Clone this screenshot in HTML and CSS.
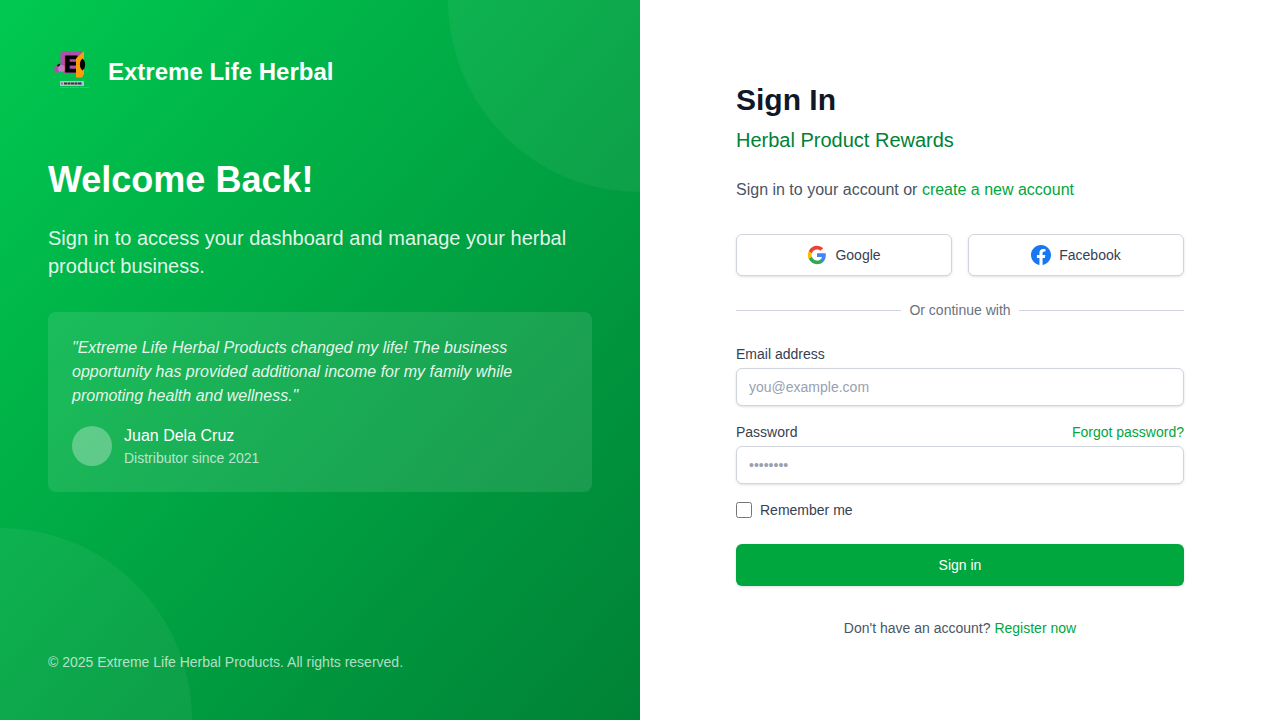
FILE: index.html
```html
<!DOCTYPE html>
<html lang="en">
<head>
<meta charset="utf-8">
<meta name="viewport" content="width=device-width, initial-scale=1">
<title>Sign In - Extreme Life Herbal</title>
<link rel="stylesheet" href="styles.css">
</head>
<body>
<div class="page">
  <aside class="intro">
    <div class="intro-top">
      <div class="brand">
        <svg class="brand-logo" viewBox="0 0 48 48" role="img" aria-label="Extreme Life Herbal logo">
          <path d="M14.500 3H36L28 10.500V26H17L12.500 22.500V5Z" fill="#b04fae"/>
          <path d="M6 19L10 17L15 19V24H12L7 25Z" fill="#b04fae"/>
          <path d="M9 17L12 15.500V19H10Z" fill="#111"/>
          <circle cx="13.500" cy="20.500" r="3.500" fill="#c878c4"/>
          <text class="brand-letter" x="16" y="24">E</text>
          <path d="M36 3L28 10.500V29.500H34L36 26Z" fill="#ff9c0a"/>
          <path d="M34.500 10.500C38 13 38 20 34.500 22.500C31 20 31 13 34.500 10.500Z" fill="#000"/>
          <rect x="12" y="33" width="24" height="5" fill="#b9c2b9"/>
          <path d="M16 35.500H34" stroke="#30343c" stroke-width="2" stroke-dasharray="3 .5"/>
          <path d="M14 34.500V36.500M28 34.500V36.500M32.500 34.500V36.500" stroke="#2637d0"/>
          <path d="M12 39.500H41" stroke="#56b778" stroke-width=".8" stroke-dasharray="9 1"/>
        </svg>
        <span class="brand-name">Extreme Life Herbal</span>
      </div>
      <h1 class="intro-title">Welcome Back!</h1>
      <p class="intro-text">Sign in to access your dashboard and manage your herbal product business.</p>
      <figure class="quote">
        <blockquote class="quote-text">"Extreme Life Herbal Products changed my life! The business opportunity has provided additional income for my family while promoting health and wellness."</blockquote>
        <figcaption class="person">
          <span class="avatar"></span>
          <span class="person-info">
            <span class="person-name">Juan Dela Cruz</span>
            <span class="person-role">Distributor since 2021</span>
          </span>
        </figcaption>
      </figure>
    </div>
    <p class="copyright">© 2025 Extreme Life Herbal Products. All rights reserved.</p>
  </aside>

  <main class="panel">
    <div class="panel-body">
      <h2 class="title">Sign In</h2>
      <p class="subtitle">Herbal Product Rewards</p>
      <p class="lead">Sign in to your account or <a class="link" href="#register">create a new account</a></p>

      <div class="social">
        <button class="social-button" type="button">
          <svg class="social-icon" viewBox="0 0 24 24" aria-hidden="true">
            <path d="M22.560 12.250c0-.78-.07-1.530-.2-2.250H12v4.260h5.920c-.26 1.370-1.040 2.530-2.210 3.310v2.770h3.570c2.080-1.920 3.280-4.740 3.280-8.090z" fill="#4285F4"/>
            <path d="M12 23c2.970 0 5.460-.98 7.280-2.660l-3.570-2.770c-.98.66-2.230 1.060-3.710 1.060-2.860 0-5.290-1.930-6.160-4.530H2.180v2.840C3.990 20.530 7.700 23 12 23z" fill="#34A853"/>
            <path d="M5.840 14.090c-.22-.66-.35-1.360-.35-2.090s.13-1.430.35-2.090V7.070H2.180C1.430 8.550 1 10.220 1 12s.43 3.450 1.180 4.930l3.660-2.840z" fill="#FBBC05"/>
            <path d="M12 5.380c1.620 0 3.060.56 4.210 1.640l3.150-3.150C17.450 2.090 14.970 1 12 1 7.700 1 3.990 3.470 2.180 7.070l3.660 2.840c.87-2.600 3.300-4.530 6.160-4.530z" fill="#EA4335"/>
          </svg>
          Google
        </button>
        <button class="social-button" type="button">
          <svg class="social-icon" viewBox="0 0 24 24" aria-hidden="true">
            <path d="M24 12.073c0-6.627-5.373-12-12-12s-12 5.373-12 12c0 5.990 4.388 10.954 10.125 11.854v-8.385H7.078v-3.470h3.047V9.430c0-3.007 1.792-4.669 4.533-4.669 1.312 0 2.686.235 2.686.235v2.953H15.830c-1.491 0-1.956.925-1.956 1.874v2.250h3.328l-.532 3.470h-2.796v8.385C19.612 23.027 24 18.062 24 12.073z" fill="#1877F2"/>
          </svg>
          Facebook
        </button>
      </div>

      <div class="divider">Or continue with</div>

      <form class="form">
        <div class="field">
          <label for="email">Email address</label>
          <input class="input" id="email" type="email" placeholder="you@example.com">
        </div>
        <div class="field">
          <div class="field-head">
            <label for="password">Password</label>
            <a class="link" href="#forgot">Forgot password?</a>
          </div>
          <input class="input" id="password" type="password" placeholder="••••••••">
        </div>
        <div class="remember">
          <input class="checkbox" id="remember" type="checkbox">
          <label for="remember">Remember me</label>
        </div>
        <button class="submit" type="submit">Sign in</button>
      </form>

      <p class="register">Don't have an account? <a class="link" href="#register">Register now</a></p>
    </div>
  </main>
</div>
</body>
</html>
```
FILE: styles.css
```css
*, *::before, *::after { box-sizing: border-box; }

body, h1, h2, p, figure, blockquote { margin: 0; }

body {
  font-family: "Liberation Sans", Arial, sans-serif;
  font-size: 14px;
  line-height: 20px;
  color: #364153;
  background: #fff;
}

button, input { font: inherit; color: inherit; }

.page {
  display: grid;
  grid-template-columns: 1fr 1fr;
  min-height: 100vh;
}

/* Green introduction side */
.intro {
  position: relative;
  overflow: hidden;
  display: flex;
  flex-direction: column;
  justify-content: space-between;
  gap: 48px;
  padding: 48px;
  color: #fff;
  background: linear-gradient(to bottom right in oklab, #00c950, #008236);
}

.intro::before, .intro::after {
  content: "";
  position: absolute;
  width: 384px;
  height: 384px;
  border-radius: 50%;
  background: rgb(255 255 255 / 0.05);
}

.intro::before { top: -192px; right: -192px; }
.intro::after { bottom: -192px; left: -192px; }

.intro-top, .copyright { position: relative; z-index: 1; }

.brand {
  display: flex;
  align-items: center;
  gap: 12px;
  margin-bottom: 64px;
}

.brand-logo { width: 48px; height: 48px; }

.brand-letter {
  font: bold 24px "Liberation Mono", "Courier New", monospace;
  fill: #000;
  stroke: #000;
  stroke-width: 1px;
}

.brand-name { font-size: 24px; line-height: 32px; font-weight: 700; }

.intro-title { font-size: 36px; line-height: 40px; margin-bottom: 24px; }

.intro-text {
  font-size: 20px;
  line-height: 28px;
  margin-bottom: 32px;
  color: rgb(255 255 255 / 0.9);
}

.quote {
  padding: 24px;
  border-radius: 8px;
  background: rgb(255 255 255 / 0.1);
}

.quote-text {
  font-size: 16px;
  line-height: 24px;
  font-style: italic;
  margin-bottom: 16px;
  color: rgb(255 255 255 / 0.9);
}

.person { display: flex; align-items: center; gap: 12px; }

.avatar {
  width: 40px;
  height: 40px;
  border-radius: 50%;
  background: rgb(255 255 255 / 0.3);
}

.person-info { display: flex; flex-direction: column; }
.person-name { font-size: 16px; line-height: 24px; }
.person-role { color: rgb(255 255 255 / 0.7); }
.copyright { color: rgb(255 255 255 / 0.7); }

/* Sign-in side */
.panel {
  display: flex;
  align-items: center;
  justify-content: center;
  padding: 48px;
}

.panel-body { width: 100%; max-width: 448px; }

.title {
  font-size: 30px;
  line-height: 36px;
  color: #101828;
  margin-bottom: 8px;
}

.subtitle {
  font-size: 20px;
  line-height: 28px;
  color: #008236;
  margin-bottom: 24px;
}

.lead {
  font-size: 16px;
  line-height: 24px;
  color: #4a5565;
  margin-bottom: 32px;
}

.link { color: #00a63e; text-decoration: none; }
.link:hover { text-decoration: underline; }

.social { display: grid; grid-template-columns: 1fr 1fr; gap: 16px; }

.social-button {
  display: flex;
  align-items: center;
  justify-content: center;
  gap: 8px;
  padding: 10px 16px;
  border: 1px solid #d1d5dc;
  border-radius: 6px;
  background: #fff;
  box-shadow: 0 1px 3px rgb(0 0 0 / 0.1), 0 1px 2px -1px rgb(0 0 0 / 0.1);
  cursor: pointer;
}

.social-icon { width: 20px; height: 20px; }

.divider {
  display: flex;
  align-items: center;
  gap: 8px;
  margin: 24px 0;
  color: #6a7282;
}

.divider::before, .divider::after {
  content: "";
  flex: 1;
  height: 1px;
  background: #d1d5dc;
}

.form { display: flex; flex-direction: column; gap: 16px; }
.field { display: flex; flex-direction: column; gap: 4px; }
.field-head { display: flex; justify-content: space-between; }

.input {
  width: 100%;
  padding: 8px 12px;
  border: 1px solid #d1d5dc;
  border-radius: 6px;
  background: #fff;
  box-shadow: 0 1px 3px rgb(0 0 0 / 0.1), 0 1px 2px -1px rgb(0 0 0 / 0.1);
}

.input::placeholder { color: #99a1af; opacity: 1; }

.remember { display: flex; align-items: center; gap: 8px; }
.checkbox { width: 16px; height: 16px; margin: 0; accent-color: #00a63e; }

.submit {
  margin-top: 8px;
  padding: 11px 16px;
  border: 0;
  border-radius: 6px;
  color: #fff;
  background: #00a63e;
  box-shadow: 0 1px 3px rgb(0 0 0 / 0.1), 0 1px 2px -1px rgb(0 0 0 / 0.1);
  cursor: pointer;
}

.register { margin-top: 32px; text-align: center; color: #4a5565; }
```
